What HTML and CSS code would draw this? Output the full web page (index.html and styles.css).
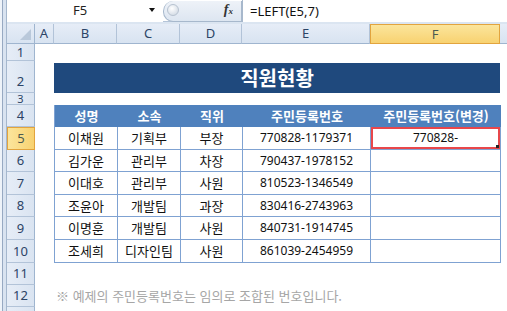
FILE: index.html
```html
<!DOCTYPE html>
<html lang="ko">
<head>
    <meta charset="UTF-8">
    <title>직원현황</title>
    <link rel="stylesheet" href="styles.css">
</head>
<body>
    <div class="formula-bar">
        <div class="name-box">
            <span class="name">F5</span>
            <span class="drop"></span>
        </div>
        <div class="fx-pill">
            <span class="knob"></span>
            <span class="fx">f<i>x</i></span>
        </div>
        <div class="formula">=LEFT(E5,7)</div>
    </div>

    <div class="sheet">
        <!-- 열 머리글 -->
        <div class="col-head corner"><span class="tri"></span></div>
        <div class="col-head">A</div>
        <div class="col-head">B</div>
        <div class="col-head">C</div>
        <div class="col-head">D</div>
        <div class="col-head">E</div>
        <div class="col-head active">F</div>
        <div class="col-head last"></div>

        <!-- 행 머리글 -->
        <div class="row-head r1">1</div>
        <div class="row-head r2">2</div>
        <div class="row-head r3">3</div>
        <div class="row-head r4">4</div>
        <div class="row-head r5 active">5</div>
        <div class="row-head r6">6</div>
        <div class="row-head r7">7</div>
        <div class="row-head r8">8</div>
        <div class="row-head r9">9</div>
        <div class="row-head r10">10</div>
        <div class="row-head r11">11</div>
        <div class="row-head r12">12</div>
        <div class="row-head r13"></div>

        <div class="title">직원현황</div>

        <div class="table">
            <div class="th">성명</div>
            <div class="th">소속</div>
            <div class="th">직위</div>
            <div class="th">주민등록번호</div>
            <div class="th">주민등록번호(변경)</div>

            <div class="td">이채원</div>
            <div class="td">기획부</div>
            <div class="td">부장</div>
            <div class="td num">770828-1179371</div>
            <div class="td num sel">770828-</div>

            <div class="td">김가운</div>
            <div class="td">관리부</div>
            <div class="td">차장</div>
            <div class="td num">790437-1978152</div>
            <div class="td"></div>

            <div class="td">이대호</div>
            <div class="td">관리부</div>
            <div class="td">사원</div>
            <div class="td num">810523-1346549</div>
            <div class="td"></div>

            <div class="td">조윤아</div>
            <div class="td">개발팀</div>
            <div class="td">과장</div>
            <div class="td num">830416-2743963</div>
            <div class="td"></div>

            <div class="td">이명훈</div>
            <div class="td">개발팀</div>
            <div class="td">사원</div>
            <div class="td num">840731-1914745</div>
            <div class="td"></div>

            <div class="td">조세희</div>
            <div class="td">디자인팀</div>
            <div class="td">사원</div>
            <div class="td num">861039-2454959</div>
            <div class="td"></div>
        </div>

        <p class="note">※ 예제의 주민등록번호는 임의로 조합된 번호입니다.</p>
    </div>
</body>
</html>
```

FILE: styles.css
```css
* {
    margin: 0;
    padding: 0;
    box-sizing: border-box;
}

/* 창 테두리 + 기본 글꼴 */
body {
    font-family: "Noto Sans CJK KR", "Noto Sans", sans-serif;
    font-size: 13px;
    color: #222;
    height: 311px;
    overflow: hidden;
    padding-left: 7px;
    background: linear-gradient(to right, #eef3f9 0 2px, #97a9c2 2px 3px, #d9e3f0 3px 6px, #a5b7cd 6px 7px, #fff 7px);
}

/* 수식 입력줄 */
.formula-bar {
    display: flex;
    height: 24px;
    border-bottom: 2px solid #dbe5f1;
    box-shadow: inset 0 -1px 0 #b4c4d8;
}

.name-box {
    width: 156px;
    background: #fff;
    display: flex;
    align-items: center;
    padding-bottom: 2px;
}

.name {
    flex: 1;
    text-align: center;
    font-family: "Noto Sans", sans-serif;
    color: #222;
    padding-left: 4px;
}

.drop {
    width: 0;
    height: 0;
    border-left: 3.5px solid transparent;
    border-right: 3.5px solid transparent;
    border-top: 4px solid #111;
    margin-right: 8px;
}

.fx-pill {
    width: 79px;
    height: 21px;
    margin-top: 1px;
    display: flex;
    align-items: center;
    justify-content: space-between;
    padding: 0 8px 2px 3px;
    background: linear-gradient(to bottom, #eef2f8, #dde6f1);
    border: 1px solid #a7b8cc;
    border-top: none;
    border-radius: 10px 0 0 10px;
}

.knob {
    width: 12px;
    height: 12px;
    border-radius: 50%;
    background: radial-gradient(circle at 40% 35%, #fff, #c9d3df);
    border: 1px solid #b7c2d0;
}

.fx {
    font-family: "Liberation Serif", serif;
    font-style: italic;
    font-weight: bold;
    font-size: 14px;
    color: #333;
}

.fx i {
    font-size: 9px;
}

.formula {
    flex: 1;
    background: #fff;
    border-left: 1px solid #a7b8cc;
    padding: 1px 0 0 7px;
    line-height: 20px;
    font-family: "Noto Sans", sans-serif;
    color: #111;
}

/* 시트 격자 */
.sheet {
    display: grid;
    grid-template-columns: 28px 19px 63px 63px 62px 128px 130px 1fr;
    grid-template-rows: 20px 17px 32px 12px 22px 23px 22px 23px 22px 23px 23px 22px 22px 1fr;
    height: 287px;
}

.col-head {
    grid-row: 1;
    background: linear-gradient(to bottom, #e6edf7, #d8e3f1);
    border-right: 1px solid #b2c3d8;
    border-bottom: 1px solid #9fb5cf;
    text-align: center;
    line-height: 19px;
    font-family: "Noto Sans", sans-serif;
    color: #2c4466;
}

.col-head.active {
    background: linear-gradient(to bottom, #fbe59c, #f8d271);
    border: 1px solid #e2a43e;
    color: #4b5a50;
}

.col-head.last {
    border-right: none;
}

.corner {
    position: relative;
    border-right: 1px solid #9fb5cf;
}

.tri {
    position: absolute;
    right: 3px;
    bottom: 3px;
    width: 0;
    height: 0;
    border-left: 11px solid transparent;
    border-bottom: 11px solid #b9c8da;
}

.row-head {
    grid-column: 1;
    background: linear-gradient(to right, #e6edf7, #dae4f1);
    border-right: 1px solid #9fb5cf;
    border-bottom: 1px solid #b2c3d8;
    display: flex;
    align-items: flex-end;
    justify-content: center;
    line-height: 21px;
    font-family: "Noto Sans", sans-serif;
    color: #2c4466;
    overflow: hidden;
}

.row-head.r1 {
    line-height: 16px;
}

.row-head.r3 {
    font-size: 11px;
    line-height: 11px;
    align-items: flex-start;
}

.row-head.active {
    background: linear-gradient(to right, #fbe59c, #f8d271);
    border: 1px solid #e2a43e;
    color: #4b5a50;
}

.r1 { grid-row: 2; }
.r2 { grid-row: 3; }
.r3 { grid-row: 4; }
.r4 { grid-row: 5; }
.r5 { grid-row: 6; }
.r6 { grid-row: 7; }
.r7 { grid-row: 8; }
.r8 { grid-row: 9; }
.r9 { grid-row: 10; }
.r10 { grid-row: 11; }
.r11 { grid-row: 12; }
.r12 { grid-row: 13; }
.r13 { grid-row: 14; border-bottom: none; }

/* 제목 */
.title {
    grid-column: 3 / 8;
    grid-row: 3;
    margin-top: 2px;
    background: #1f497d;
    color: #fff;
    font-size: 20px;
    font-weight: bold;
    text-align: center;
    line-height: 30px;
}

/* 표 */
.table {
    grid-column: 3 / 8;
    grid-row: 5 / 12;
    display: grid;
    grid-template-columns: 63px 63px 62px 128px 130px;
    grid-template-rows: 22px 23px 22px 23px 22px 23px 23px;
    border-left: 1px solid #7fa2d2;
}

.th {
    background: #4f81bd;
    color: #fff;
    font-weight: bold;
    text-align: center;
    line-height: 22px;
}

.td {
    border-right: 1px solid #7fa2d2;
    border-bottom: 1px solid #7fa2d2;
    text-align: center;
    line-height: 22px;
    color: #111;
}

.td.num {
    font-family: "Noto Sans", sans-serif;
    font-size: 12px;
}

.td.sel {
    position: relative;
    box-shadow: inset 0 0 0 2px #e8474b;
}

.td.sel::after {
    content: '';
    position: absolute;
    right: 1px;
    bottom: 1px;
    width: 3px;
    height: 3px;
    background: #222;
}

.note {
    grid-column: 3 / 9;
    grid-row: 13;
    color: #a6a6a6;
    line-height: 22px;
    padding-left: 2px;
}
```
